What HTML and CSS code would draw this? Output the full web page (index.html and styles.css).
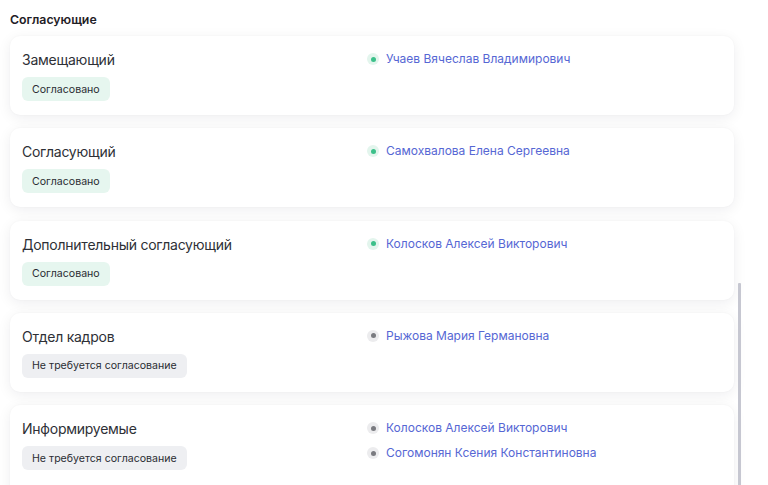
FILE: index.html
```html
<!DOCTYPE html>
<html lang="ru">
<head>
<meta charset="utf-8">
<link rel="stylesheet" href="styles.css">
</head>
<body>
<div class="page">
  <h2 class="heading">Согласующие</h2>
  <div class="list">
    <div class="card">
      <div class="left">
        <div class="role">Замещающий</div>
        <span class="badge ok">Согласовано</span>
      </div>
      <div class="people">
        <div class="person"><span class="dot ok"></span><span class="name">Учаев Вячеслав Владимирович</span></div>
      </div>
    </div>
    <div class="card">
      <div class="left">
        <div class="role">Согласующий</div>
        <span class="badge ok">Согласовано</span>
      </div>
      <div class="people">
        <div class="person"><span class="dot ok"></span><span class="name">Самохвалова Елена Сергеевна</span></div>
      </div>
    </div>
    <div class="card">
      <div class="left">
        <div class="role">Дополнительный согласующий</div>
        <span class="badge ok">Согласовано</span>
      </div>
      <div class="people">
        <div class="person"><span class="dot ok"></span><span class="name">Колосков Алексей Викторович</span></div>
      </div>
    </div>
    <div class="card">
      <div class="left">
        <div class="role">Отдел кадров</div>
        <span class="badge none">Не требуется согласование</span>
      </div>
      <div class="people">
        <div class="person"><span class="dot none"></span><span class="name">Рыжова Мария Германовна</span></div>
      </div>
    </div>
    <div class="card last">
      <div class="left">
        <div class="role">Информируемые</div>
        <span class="badge none">Не требуется согласование</span>
      </div>
      <div class="people">
        <div class="person"><span class="dot none"></span><span class="name">Колосков Алексей Викторович</span></div>
        <div class="person"><span class="dot none"></span><span class="name">Согомонян Ксения Константиновна</span></div>
      </div>
    </div>
  </div>
  <div class="scrollbar"></div>
</div>
</body>
</html>
```

FILE: styles.css
```css
* { box-sizing: border-box; }
html, body {
  margin: 0;
  padding: 0;
  background: #ffffff;
  overflow: hidden;
}
body {
  font-family: Inter, "Noto Sans", sans-serif;
  color: #2b2d33;
  width: 768px;
  height: 485px;
}
.page {
  position: relative;
  padding: 11px 34px 0 10px;
  height: 485px;
}
.heading {
  margin: 0;
  font-size: 12.3px;
  font-weight: 600;
  line-height: 17px;
  color: #1f2026;
  height: 25px;
}
.list {
  display: flex;
  flex-direction: column;
  gap: 13.3px;
}
.card {
  background: #fff;
  border-radius: 10px;
  box-shadow: 0 3px 14px rgba(20, 20, 40, 0.07), 0 0 2px rgba(20, 20, 40, 0.04);
  height: 79px;
  padding: 14px 12px 0 12px;
  display: grid;
  grid-template-columns: 345px 1fr;
  flex-shrink: 0;
}
.card.last { height: 95px; }
.left {
  display: flex;
  flex-direction: column;
  align-items: flex-start;
  gap: 7px;
}
.role {
  font-size: 14px;
  letter-spacing: -0.25px;
  line-height: 20px;
  color: #2e3036;
}
.badge {
  display: inline-flex;
  align-items: center;
  height: 24px;
  padding: 0 10px;
  border-radius: 6px;
  font-size: 10.6px;
  color: #2b2d33;
}
.badge.ok { background: #e6f6ef; }
.badge.none { background: #eeeff2; }
.people {
  display: flex;
  flex-direction: column;
  gap: 7px;
}
.person {
  display: flex;
  align-items: center;
  gap: 7px;
  height: 18px;
}
.dot {
  width: 12px;
  height: 12px;
  border-radius: 50%;
  display: inline-flex;
  align-items: center;
  justify-content: center;
  flex-shrink: 0;
}
.dot::after {
  content: "";
  width: 5px;
  height: 5px;
  border-radius: 50%;
}
.dot.ok { background: #e3f5ed; }
.dot.ok::after { background: #3cc08a; }
.dot.none { background: #ececee; }
.dot.none::after { background: #7a7b80; }
.name {
  font-size: 12px;
  color: #5667d4;
  line-height: 18px;
}
.scrollbar {
  position: absolute;
  left: 738px;
  top: 283px;
  width: 3px;
  height: 210px;
  background: #c6c7d1;
  border-radius: 1px;
}
```
